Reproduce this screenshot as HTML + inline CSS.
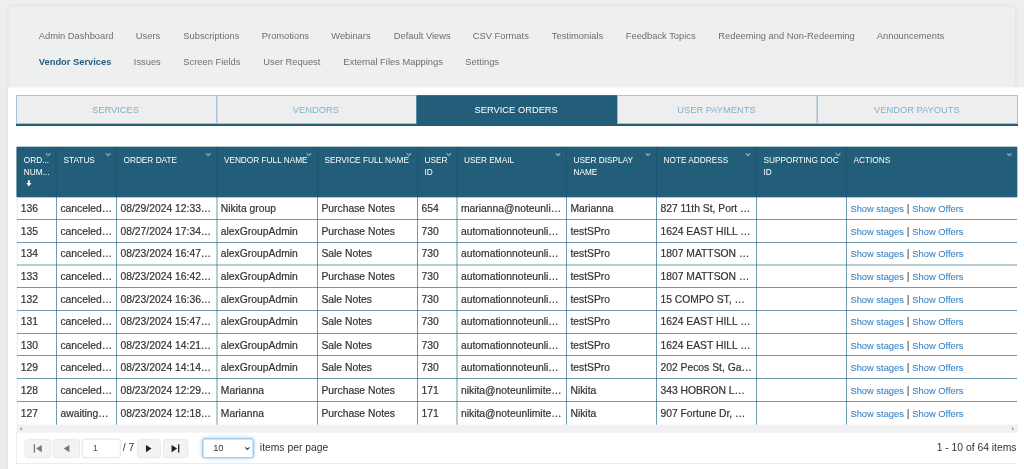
<!DOCTYPE html>
<html lang="en">
<head>
<meta charset="utf-8">
<title>Vendor Services - Service Orders</title>
<style>
*{box-sizing:border-box;margin:0;padding:0}
html,body{width:1024px;height:469px;overflow:hidden;background:#fff;font-family:"Liberation Sans",Arial,sans-serif}
#root{position:absolute;left:0;top:0;width:1536px;height:704px;transform:scale(.6666667);transform-origin:0 0;overflow:hidden}
.nav,.row,.th .t,.ptx,.pin span,.psel span{will-change:opacity}
#root div,#root a,#root span{position:absolute}
.topbg{left:0;top:0;width:1536px;height:131.3px;background:#eeeeee;overflow:hidden}
.leftbg{left:0;top:131.3px;width:12.4px;height:580px;background:linear-gradient(90deg,#ececec 0,#ebebeb 70%,#e5e5e5 100%)}
.navp{left:12.5px;top:9.75px;width:1509.7px;height:140px;background:#eef0f0;box-shadow:0 0 9px rgba(0,0,0,.075)}
.nav{left:0;top:0}
.nav a{font-size:14px;color:#6e6e6e;white-space:nowrap;text-decoration:none;line-height:18px}
.nav a.act{color:#225e79;font-weight:bold}
.r1{top:43.6px}.r2{top:84px}
.tabline{left:24px;top:185.6px;width:1502.5px;height:3px;background:#225e79}
.tabtx{left:24px;top:142.6px;width:1502.5px;height:43px;will-change:opacity}
.tabtx span{top:0;width:298.5px;height:43px;text-align:center;line-height:42.5px;font-size:14px;color:#7fb2cc;white-space:nowrap}
.tabtx span.on{color:#fff}
.tab{top:142.6px;height:43.4px;border:1px solid #7eb0cb;background:#eeeeee;color:#7fb2cc;font-size:14px;text-align:center;line-height:41px;white-space:nowrap}
.tab.on{background:#225e79;color:#fff;border-color:#225e79}
.ghead{background:#225e79}
.th{border-left:1px solid #1a526b;color:#fff;font-size:12.4px;line-height:17.6px;overflow:hidden}
.th .t{position:absolute;left:10px;top:11.8px;white-space:nowrap}
.th .srt{position:absolute;left:3.4px;top:37.6px;width:8.6px;height:10px}
.th .ch{position:absolute;right:8px;top:8px;width:8.4px;height:5.4px}
.gbody{overflow:hidden}
.vl{top:0;width:1px;height:100%;background:#2a6783}
.vl.first{background:#d4d4d4;left:-0.3px}
.hl{left:0;width:100%;height:1px;background:#2a6783}
.row{left:0;width:100%;height:34.14px}
.td{-webkit-text-stroke-width:0.3px;top:0;height:100%;font-size:15.5px;color:#333;padding-left:6.4px;white-space:nowrap;overflow:hidden;line-height:35px}
#root .td a{position:static;color:#3f87c6;-webkit-text-stroke-width:0.15px}
#root .td.act a{font-size:14px}
.td.act{-webkit-text-stroke-width:0}
.hscroll{left:24.75px;top:637px;width:1502px;height:12.5px;background:#f1f1f1}
.hscroll svg{position:absolute;top:3px;width:5px;height:6.6px}
.hscroll .sl{left:4px}.hscroll .sr{right:5px}
.pager{left:24.25px;top:649px;width:1502px;height:46.5px;border:1px solid #e2e2e2;border-top:none;border-right:none;background:#fff}
.pb{top:9.5px;height:28px;background:#f3f3f3;border:1px solid #e0e0e0;border-radius:4px}
.pb svg{position:absolute;left:50%;top:50%;margin:-6.8px 0 0 -8px}
.pin{left:98px;top:8.5px;width:58px;height:29.5px;border:1px solid #d6d6d6;border-radius:4px;background:#fff;font-size:14px;color:#333;line-height:28px;color:#555}
.pin span{left:15px;top:-1.2px}
.ptx{top:14px;font-size:15.5px;color:#333;line-height:18px;white-space:nowrap}
.psel{left:279px;top:8.5px;width:76px;height:29.5px;border:1px solid #66afe9;border-radius:4px;background:#fff;box-shadow:0 0 5px rgba(102,175,233,.7)}
.psel span{left:14.5px;top:-1px;font-size:14px;line-height:28px;color:#333}
.psel svg{position:absolute;right:4px;top:11.5px}
</style>
</head>
<body>
<div id="root">
<div class="topbg"><div class="navp"></div></div><div class="leftbg"></div>
<div class="nav">
<a class="r1" style="left:58.20px">Admin Dashboard</a>
<a class="r1" style="left:203.70px">Users</a>
<a class="r1" style="left:274.95px">Subscriptions</a>
<a class="r1" style="left:392.70px">Promotions</a>
<a class="r1" style="left:496.95px">Webinars</a>
<a class="r1" style="left:590.70px">Default Views</a>
<a class="r1" style="left:709.20px">CSV Formats</a>
<a class="r1" style="left:827.70px">Testimonials</a>
<a class="r1" style="left:938.70px">Feedback Topics</a>
<a class="r1" style="left:1077.45px">Redeeming and Non-Redeeming</a>
<a class="r1" style="left:1315.20px">Announcements</a>
<a class="r2 act" style="left:58.20px">Vendor Services</a>
<a class="r2" style="left:200.70px">Issues</a>
<a class="r2" style="left:274.95px">Screen Fields</a>
<a class="r2" style="left:394.95px">User Request</a>
<a class="r2" style="left:514.95px">External Files Mappings</a>
<a class="r2" style="left:697.95px">Settings</a>
</div>
<div class="tabline"></div>
<div class="tab" style="left:24.00px;width:300.5px"></div>
<div class="tab" style="left:324.50px;width:300.5px"></div>
<div class="tab on" style="left:625.00px;width:300.5px"></div>
<div class="tab" style="left:925.50px;width:300.5px"></div>
<div class="tab" style="left:1226.00px;width:300.5px"></div>
<div class="tabtx">
<span style="left:0.00px">SERVICES</span>
<span style="left:300.50px">VENDORS</span>
<span style="left:601.00px" class=on>SERVICE ORDERS</span>
<span style="left:901.50px">USER PAYMENTS</span>
<span style="left:1202.00px">VENDOR PAYOUTS</span>
</div>
<div class="ghead" style="left:24.75px;top:220.3px;width:1501.5px;height:75.55px"></div>
<div class="th" style="left:24.75px;top:220.5px;width:59.51px;height:74.25px"><span class="t">ORD...<br>NUM...<svg class="srt" viewBox="0 0 8 10"><path d="M2.6 0.3 H5.4 V4.6 H7.8 L4 9.7 L0.2 4.6 H2.6Z" fill="#fff"/></svg></span><svg class="ch" viewBox="0 0 10 6"><path d="M1 1 L5 5 L9 1" fill="none" stroke="#fff" stroke-width="1.7"/></svg></div>
<div class="th" style="left:84.25px;top:220.5px;width:90.00px;height:74.25px"><span class="t">STATUS</span><svg class="ch" viewBox="0 0 10 6"><path d="M1 1 L5 5 L9 1" fill="none" stroke="#fff" stroke-width="1.7"/></svg></div>
<div class="th" style="left:174.25px;top:220.5px;width:150.57px;height:74.25px"><span class="t">ORDER DATE</span><svg class="ch" viewBox="0 0 10 6"><path d="M1 1 L5 5 L9 1" fill="none" stroke="#fff" stroke-width="1.7"/></svg></div>
<div class="th" style="left:324.83px;top:220.5px;width:150.93px;height:74.25px"><span class="t">VENDOR FULL NAME</span><svg class="ch" viewBox="0 0 10 6"><path d="M1 1 L5 5 L9 1" fill="none" stroke="#fff" stroke-width="1.7"/></svg></div>
<div class="th" style="left:475.75px;top:220.5px;width:150.00px;height:74.25px"><span class="t">SERVICE FULL NAME</span><svg class="ch" viewBox="0 0 10 6"><path d="M1 1 L5 5 L9 1" fill="none" stroke="#fff" stroke-width="1.7"/></svg></div>
<div class="th" style="left:625.75px;top:220.5px;width:59.25px;height:74.25px"><span class="t">USER<br>ID</span><svg class="ch" viewBox="0 0 10 6"><path d="M1 1 L5 5 L9 1" fill="none" stroke="#fff" stroke-width="1.7"/></svg></div>
<div class="th" style="left:685.00px;top:220.5px;width:164.25px;height:74.25px"><span class="t">USER EMAIL</span><svg class="ch" viewBox="0 0 10 6"><path d="M1 1 L5 5 L9 1" fill="none" stroke="#fff" stroke-width="1.7"/></svg></div>
<div class="th" style="left:849.25px;top:220.5px;width:135.00px;height:74.25px"><span class="t">USER DISPLAY<br>NAME</span><svg class="ch" viewBox="0 0 10 6"><path d="M1 1 L5 5 L9 1" fill="none" stroke="#fff" stroke-width="1.7"/></svg></div>
<div class="th" style="left:984.25px;top:220.5px;width:150.00px;height:74.25px"><span class="t">NOTE ADDRESS</span><svg class="ch" viewBox="0 0 10 6"><path d="M1 1 L5 5 L9 1" fill="none" stroke="#fff" stroke-width="1.7"/></svg></div>
<div class="th" style="left:1134.25px;top:220.5px;width:135.00px;height:74.25px"><span class="t">SUPPORTING DOC<br>ID</span><svg class="ch" viewBox="0 0 10 6"><path d="M1 1 L5 5 L9 1" fill="none" stroke="#fff" stroke-width="1.7"/></svg></div>
<div class="th" style="left:1269.25px;top:220.5px;width:257.00px;height:74.25px"><span class="t">ACTIONS</span><svg class="ch" viewBox="0 0 10 6"><path d="M1 1 L5 5 L9 1" fill="none" stroke="#fff" stroke-width="1.7"/></svg></div>
<div class="gbody" style="left:24.75px;top:294.75px;width:1501.5px;height:342.75px">
<div class="vl first" style="left:0.00px"></div>
<div class="vl" style="left:59.51px"></div>
<div class="vl" style="left:149.50px"></div>
<div class="vl" style="left:300.08px"></div>
<div class="vl" style="left:451.00px"></div>
<div class="vl" style="left:601.00px"></div>
<div class="vl" style="left:660.25px"></div>
<div class="vl" style="left:824.50px"></div>
<div class="vl" style="left:959.50px"></div>
<div class="vl" style="left:1109.50px"></div>
<div class="vl" style="left:1244.50px"></div>
<div class="hl" style="top:34.00px"></div>
<div class="hl" style="top:68.50px"></div>
<div class="hl" style="top:102.17px"></div>
<div class="hl" style="top:136.00px"></div>
<div class="hl" style="top:170.50px"></div>
<div class="hl" style="top:205.00px"></div>
<div class="hl" style="top:238.15px"></div>
<div class="hl" style="top:272.50px"></div>
<div class="hl" style="top:307.00px"></div>
<div class="row" style="top:0.00px">
<div class="td" style="left:0.00px;width:59.51px">136</div>
<div class="td" style="left:59.51px;width:90.00px">canceled…</div>
<div class="td" style="left:149.50px;width:150.57px">08/29/2024 12:33…</div>
<div class="td" style="left:300.08px;width:150.93px">Nikita group</div>
<div class="td" style="left:451.00px;width:150.00px">Purchase Notes</div>
<div class="td" style="left:601.00px;width:59.25px">654</div>
<div class="td" style="left:660.25px;width:164.25px">marianna@noteunli…</div>
<div class="td" style="left:824.50px;width:135.00px">Marianna</div>
<div class="td" style="left:959.50px;width:150.00px">827 11th St, Port …</div>
<div class="td" style="left:1109.50px;width:135.00px"></div>
<div class="td act" style="left:1244.50px;width:257.00px"><a>Show stages</a> | <a>Show Offers</a></div>
</div>
<div class="row" style="top:34.14px">
<div class="td" style="left:0.00px;width:59.51px">135</div>
<div class="td" style="left:59.51px;width:90.00px">canceled…</div>
<div class="td" style="left:149.50px;width:150.57px">08/27/2024 17:34…</div>
<div class="td" style="left:300.08px;width:150.93px">alexGroupAdmin</div>
<div class="td" style="left:451.00px;width:150.00px">Purchase Notes</div>
<div class="td" style="left:601.00px;width:59.25px">730</div>
<div class="td" style="left:660.25px;width:164.25px">automationnoteunli…</div>
<div class="td" style="left:824.50px;width:135.00px">testSPro</div>
<div class="td" style="left:959.50px;width:150.00px">1624 EAST HILL …</div>
<div class="td" style="left:1109.50px;width:135.00px"></div>
<div class="td act" style="left:1244.50px;width:257.00px"><a>Show stages</a> | <a>Show Offers</a></div>
</div>
<div class="row" style="top:68.28px">
<div class="td" style="left:0.00px;width:59.51px">134</div>
<div class="td" style="left:59.51px;width:90.00px">canceled…</div>
<div class="td" style="left:149.50px;width:150.57px">08/23/2024 16:47…</div>
<div class="td" style="left:300.08px;width:150.93px">alexGroupAdmin</div>
<div class="td" style="left:451.00px;width:150.00px">Sale Notes</div>
<div class="td" style="left:601.00px;width:59.25px">730</div>
<div class="td" style="left:660.25px;width:164.25px">automationnoteunli…</div>
<div class="td" style="left:824.50px;width:135.00px">testSPro</div>
<div class="td" style="left:959.50px;width:150.00px">1807 MATTSON …</div>
<div class="td" style="left:1109.50px;width:135.00px"></div>
<div class="td act" style="left:1244.50px;width:257.00px"><a>Show stages</a> | <a>Show Offers</a></div>
</div>
<div class="row" style="top:102.42px">
<div class="td" style="left:0.00px;width:59.51px">133</div>
<div class="td" style="left:59.51px;width:90.00px">canceled…</div>
<div class="td" style="left:149.50px;width:150.57px">08/23/2024 16:42…</div>
<div class="td" style="left:300.08px;width:150.93px">alexGroupAdmin</div>
<div class="td" style="left:451.00px;width:150.00px">Purchase Notes</div>
<div class="td" style="left:601.00px;width:59.25px">730</div>
<div class="td" style="left:660.25px;width:164.25px">automationnoteunli…</div>
<div class="td" style="left:824.50px;width:135.00px">testSPro</div>
<div class="td" style="left:959.50px;width:150.00px">1807 MATTSON …</div>
<div class="td" style="left:1109.50px;width:135.00px"></div>
<div class="td act" style="left:1244.50px;width:257.00px"><a>Show stages</a> | <a>Show Offers</a></div>
</div>
<div class="row" style="top:136.56px">
<div class="td" style="left:0.00px;width:59.51px">132</div>
<div class="td" style="left:59.51px;width:90.00px">canceled…</div>
<div class="td" style="left:149.50px;width:150.57px">08/23/2024 16:36…</div>
<div class="td" style="left:300.08px;width:150.93px">alexGroupAdmin</div>
<div class="td" style="left:451.00px;width:150.00px">Sale Notes</div>
<div class="td" style="left:601.00px;width:59.25px">730</div>
<div class="td" style="left:660.25px;width:164.25px">automationnoteunli…</div>
<div class="td" style="left:824.50px;width:135.00px">testSPro</div>
<div class="td" style="left:959.50px;width:150.00px">15 COMPO ST, …</div>
<div class="td" style="left:1109.50px;width:135.00px"></div>
<div class="td act" style="left:1244.50px;width:257.00px"><a>Show stages</a> | <a>Show Offers</a></div>
</div>
<div class="row" style="top:170.70px">
<div class="td" style="left:0.00px;width:59.51px">131</div>
<div class="td" style="left:59.51px;width:90.00px">canceled…</div>
<div class="td" style="left:149.50px;width:150.57px">08/23/2024 15:47…</div>
<div class="td" style="left:300.08px;width:150.93px">alexGroupAdmin</div>
<div class="td" style="left:451.00px;width:150.00px">Sale Notes</div>
<div class="td" style="left:601.00px;width:59.25px">730</div>
<div class="td" style="left:660.25px;width:164.25px">automationnoteunli…</div>
<div class="td" style="left:824.50px;width:135.00px">testSPro</div>
<div class="td" style="left:959.50px;width:150.00px">1624 EAST HILL …</div>
<div class="td" style="left:1109.50px;width:135.00px"></div>
<div class="td act" style="left:1244.50px;width:257.00px"><a>Show stages</a> | <a>Show Offers</a></div>
</div>
<div class="row" style="top:204.84px">
<div class="td" style="left:0.00px;width:59.51px">130</div>
<div class="td" style="left:59.51px;width:90.00px">canceled…</div>
<div class="td" style="left:149.50px;width:150.57px">08/23/2024 14:21…</div>
<div class="td" style="left:300.08px;width:150.93px">alexGroupAdmin</div>
<div class="td" style="left:451.00px;width:150.00px">Sale Notes</div>
<div class="td" style="left:601.00px;width:59.25px">730</div>
<div class="td" style="left:660.25px;width:164.25px">automationnoteunli…</div>
<div class="td" style="left:824.50px;width:135.00px">testSPro</div>
<div class="td" style="left:959.50px;width:150.00px">1624 EAST HILL …</div>
<div class="td" style="left:1109.50px;width:135.00px"></div>
<div class="td act" style="left:1244.50px;width:257.00px"><a>Show stages</a> | <a>Show Offers</a></div>
</div>
<div class="row" style="top:238.98px">
<div class="td" style="left:0.00px;width:59.51px">129</div>
<div class="td" style="left:59.51px;width:90.00px">canceled…</div>
<div class="td" style="left:149.50px;width:150.57px">08/23/2024 14:14…</div>
<div class="td" style="left:300.08px;width:150.93px">alexGroupAdmin</div>
<div class="td" style="left:451.00px;width:150.00px">Sale Notes</div>
<div class="td" style="left:601.00px;width:59.25px">730</div>
<div class="td" style="left:660.25px;width:164.25px">automationnoteunli…</div>
<div class="td" style="left:824.50px;width:135.00px">testSPro</div>
<div class="td" style="left:959.50px;width:150.00px">202 Pecos St, Ga…</div>
<div class="td" style="left:1109.50px;width:135.00px"></div>
<div class="td act" style="left:1244.50px;width:257.00px"><a>Show stages</a> | <a>Show Offers</a></div>
</div>
<div class="row" style="top:273.12px">
<div class="td" style="left:0.00px;width:59.51px">128</div>
<div class="td" style="left:59.51px;width:90.00px">canceled…</div>
<div class="td" style="left:149.50px;width:150.57px">08/23/2024 12:29…</div>
<div class="td" style="left:300.08px;width:150.93px">Marianna</div>
<div class="td" style="left:451.00px;width:150.00px">Purchase Notes</div>
<div class="td" style="left:601.00px;width:59.25px">171</div>
<div class="td" style="left:660.25px;width:164.25px">nikita@noteunlimite…</div>
<div class="td" style="left:824.50px;width:135.00px">Nikita</div>
<div class="td" style="left:959.50px;width:150.00px">343 HOBRON L…</div>
<div class="td" style="left:1109.50px;width:135.00px"></div>
<div class="td act" style="left:1244.50px;width:257.00px"><a>Show stages</a> | <a>Show Offers</a></div>
</div>
<div class="row" style="top:307.26px">
<div class="td" style="left:0.00px;width:59.51px">127</div>
<div class="td" style="left:59.51px;width:90.00px">awaiting…</div>
<div class="td" style="left:149.50px;width:150.57px">08/23/2024 12:18…</div>
<div class="td" style="left:300.08px;width:150.93px">Marianna</div>
<div class="td" style="left:451.00px;width:150.00px">Purchase Notes</div>
<div class="td" style="left:601.00px;width:59.25px">171</div>
<div class="td" style="left:660.25px;width:164.25px">nikita@noteunlimite…</div>
<div class="td" style="left:824.50px;width:135.00px">Nikita</div>
<div class="td" style="left:959.50px;width:150.00px">907 Fortune Dr, …</div>
<div class="td" style="left:1109.50px;width:135.00px"></div>
<div class="td act" style="left:1244.50px;width:257.00px"><a>Show stages</a> | <a>Show Offers</a></div>
</div>
</div>
<div class="hscroll"><svg class="sl" viewBox="0 0 6 8"><path d="M5 0.5 L1 4 L5 7.5Z" fill="#9a9a9a"/></svg><svg class="sr" viewBox="0 0 6 8"><path d="M1 0.5 L5 4 L1 7.5Z" fill="#9a9a9a"/></svg></div>
<div class="pager">
<div class="pb" style="left:11.5px;width:40px"><svg viewBox="0 0 14 12" width="16" height="13.6"><rect x="1.4" y="0.4" width="1.7" height="11.2" fill="#777"/><path d="M12 1.2 L4.6 6 L12 10.8Z" fill="#777"/></svg></div>
<div class="pb" style="left:55px;width:40px"><svg viewBox="0 0 14 12" width="16" height="13.6"><path d="M10.6 1.2 L3.2 6 L10.6 10.8Z" fill="#777"/></svg></div>
<div class="pin"><span>1</span></div>
<span class="ptx" style="left:159px">/ 7</span>
<div class="pb" style="left:180.5px;width:35px"><svg viewBox="0 0 14 12" width="16" height="13.6"><path d="M3.4 1.2 L10.8 6 L3.4 10.8Z" fill="#222"/></svg></div>
<div class="pb" style="left:219.5px;width:37px"><svg viewBox="0 0 14 12" width="16" height="13.6"><path d="M2 1.2 L9.4 6 L2 10.8Z" fill="#222"/><rect x="10.6" y="0.4" width="1.7" height="11.2" fill="#222"/></svg></div>
<div class="psel"><span>10</span><svg viewBox="0 0 10 6" width="8" height="5"><path d="M1 1 L5 5 L9 1" fill="none" stroke="#333" stroke-width="2"/></svg></div>
<span class="ptx" style="left:364.5px">items per page</span>
<span class="ptx" style="right:1.5px">1 - 10 of 64 items</span>
</div>

</div>
</body>
</html>
